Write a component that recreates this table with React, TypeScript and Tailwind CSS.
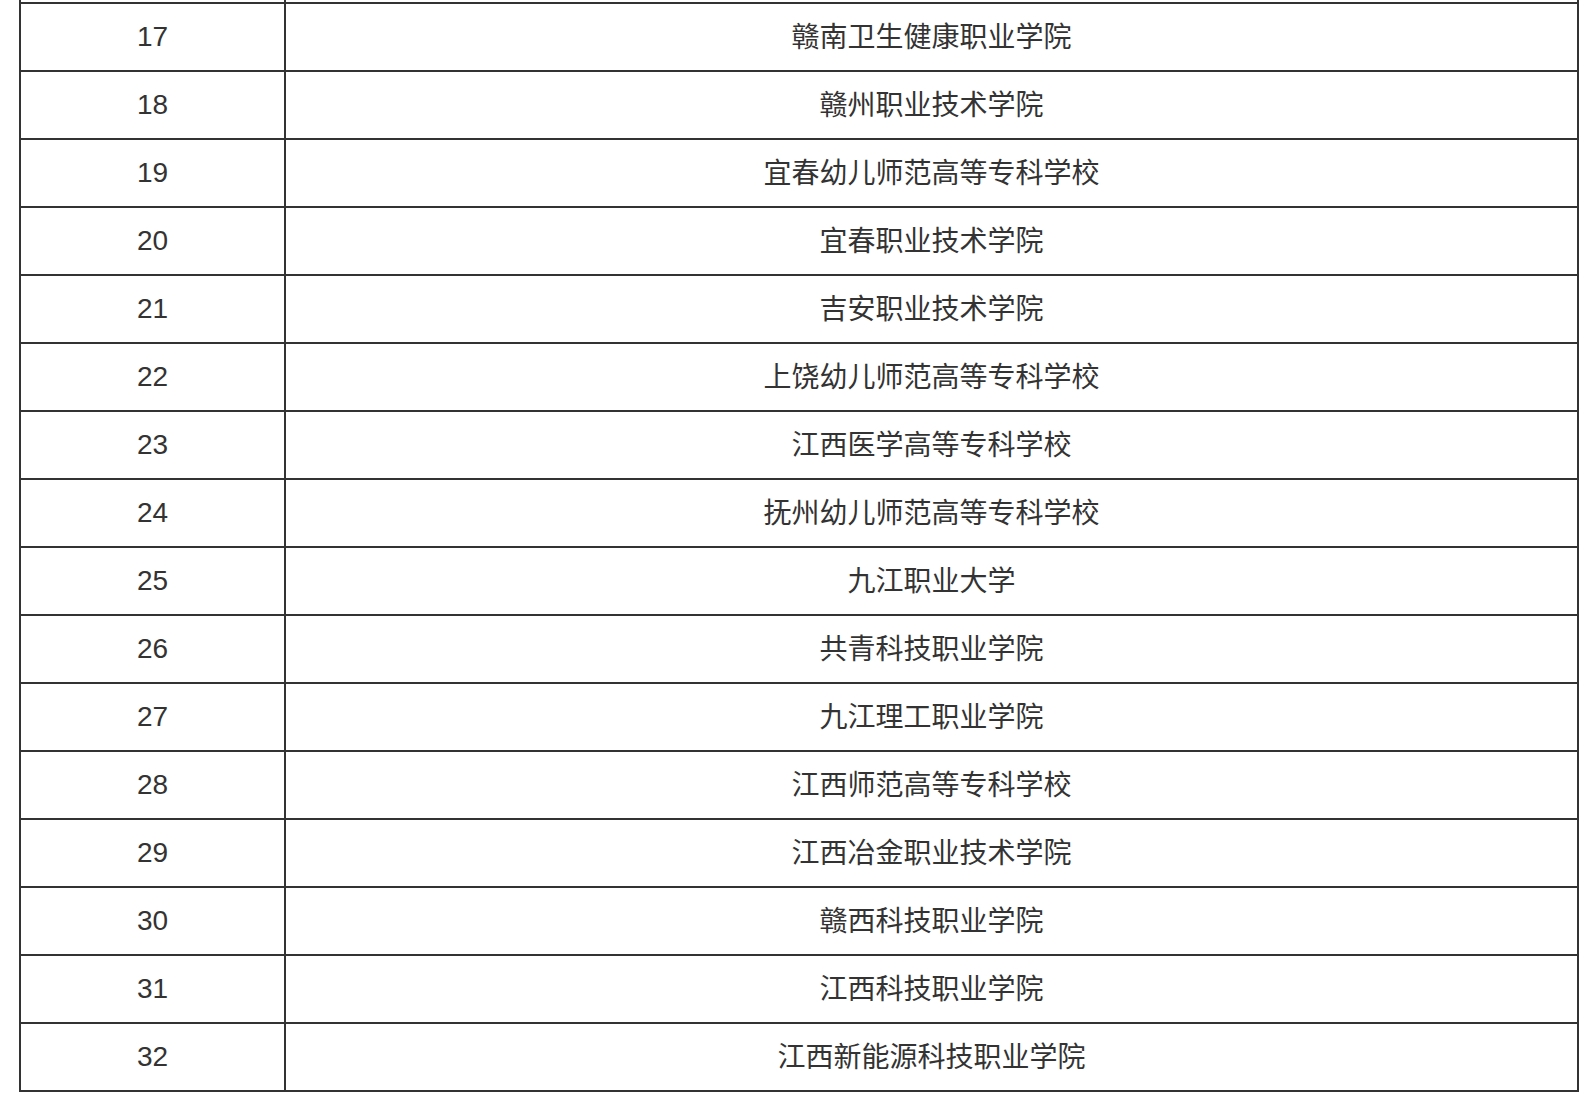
const rows: [number, string][] = [
  [17, "赣南卫生健康职业学院"],
  [18, "赣州职业技术学院"],
  [19, "宜春幼儿师范高等专科学校"],
  [20, "宜春职业技术学院"],
  [21, "吉安职业技术学院"],
  [22, "上饶幼儿师范高等专科学校"],
  [23, "江西医学高等专科学校"],
  [24, "抚州幼儿师范高等专科学校"],
  [25, "九江职业大学"],
  [26, "共青科技职业学院"],
  [27, "九江理工职业学院"],
  [28, "江西师范高等专科学校"],
  [29, "江西冶金职业技术学院"],
  [30, "赣西科技职业学院"],
  [31, "江西科技职业学院"],
  [32, "江西新能源科技职业学院"],
];

export default function App() {
  return (
    <div className="w-[1594px] h-[1110px] bg-white overflow-hidden">
      <div
        className="ml-[19px] w-[1560px] border-x-2 border-b-2 border-[#333] text-[#333] text-[28px]"
        style={{ fontFamily: '"Liberation Sans", "Noto Sans CJK SC", sans-serif' }}
      >
        <div className="grid grid-cols-[265px_1fr] h-[2px]">
          <div className="border-r-2 border-[#333]" />
          <div />
        </div>
        {rows.map(([n, name]) => (
          <div key={n} className="grid grid-cols-[265px_1fr] h-[68px] border-t-2 border-[#333]">
            <div className="border-r-2 border-[#333] flex items-center justify-center">{n}</div>
            <div className="flex items-center justify-center pt-[2px]">{name}</div>
          </div>
        ))}
      </div>
    </div>
  );
}
